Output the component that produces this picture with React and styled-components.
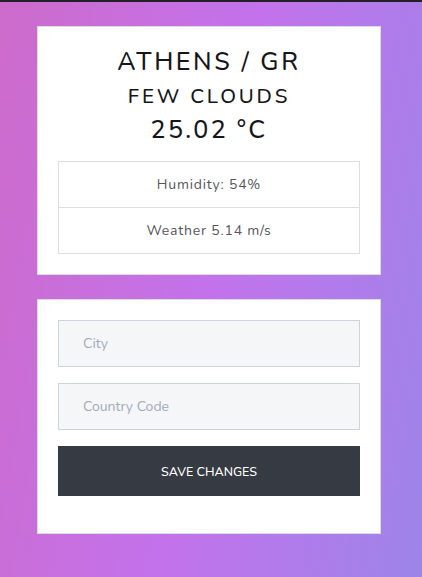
import React from "react";
import styled, { createGlobalStyle } from "styled-components";

const Global = createGlobalStyle`
  html, body { margin: 0; padding: 0; }
  body {
    font-family: "Nunito", "Lato", "Open Sans", sans-serif;
    min-height: 577px;
    background: linear-gradient(100deg, #cd6bcb 0%, #c372ec 50%, #9d85e8 100%);
    border-top: 2px solid #23202a;
    box-sizing: border-box;
  }
  * { box-sizing: border-box; }
`;

const Page = styled.div`
  display: flex;
  flex-direction: column;
  gap: 24px;
  padding: 24px 41px 40px 37px;
`;

const Card = styled.div`
  background: #fff;
  border: 1px solid #dcdcdc;
  padding: ${(p) => p.$pad};
  display: flex;
  flex-direction: column;
`;

const Title = styled.h1`
  margin: 0;
  text-align: center;
  font-weight: 500;
  color: #16161a;
  font-size: ${(p) => p.$size}px;
  letter-spacing: ${(p) => p.$ls}px;
  line-height: ${(p) => p.$lh}px;
`;

const Table = styled.div`
  margin-top: 14px;
  border: 1px solid #dedede;
`;

const Row = styled.div`
  height: 45px;
  display: flex;
  align-items: center;
  justify-content: center;
  font-size: 14px;
  letter-spacing: 0.8px;
  color: #55565c;
  & + & { border-top: 1px solid #dedede; height: 46px; }
`;

const Form = styled.div`
  display: flex;
  flex-direction: column;
  gap: 16px;
`;

const Input = styled.input`
  height: 47px;
  width: 100%;
  background: #f5f6f8;
  border: 1px solid #cfd3da;
  padding: 0 24px;
  font-family: inherit;
  font-size: 14px;
  color: #333;
  outline: none;
  &::placeholder { color: #a3abb8; }
`;

const Button = styled.button`
  height: 50px;
  width: 100%;
  background: #363a42;
  color: #fff;
  border: none;
  font-family: inherit;
  font-size: 12.5px;
  font-weight: 500;
  letter-spacing: 0;
`;

export default function App() {
  return (
    <>
      <Global />
      <Page>
        <Card $pad="19px 20px 20px">
          <Title $size={25} $ls={2.6} $lh={33}>ATHENS / GR</Title>
          <Title $size={20.5} $ls={2.8} $lh={34}>FEW CLOUDS</Title>
          <Title $size={25} $ls={2.3} $lh={34}>25.02 °C</Title>
          <Table>
            <Row>Humidity: 54%</Row>
            <Row>Weather 5.14 m/s</Row>
          </Table>
        </Card>
        <Card $pad="20px 20px 37px">
          <Form>
            <Input placeholder="City" />
            <Input placeholder="Country Code" />
            <Button>SAVE CHANGES</Button>
          </Form>
        </Card>
      </Page>
    </>
  );
}
